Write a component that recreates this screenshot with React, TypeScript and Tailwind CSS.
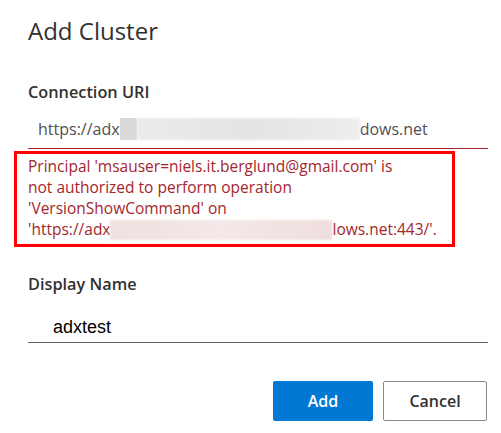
import React from "react";

export default function App() {
  return (
    <div
      className="w-[501px] h-[433px] bg-white overflow-hidden relative"
      style={{ fontFamily: '"Open Sans", "Noto Sans", sans-serif' }}
    >
      <div className="pl-[28px] pr-[13px]">
        <h1 className="pt-[15px] text-[24px] leading-[32px] text-[#323130] font-normal">
          Add Cluster
        </h1>
        <div className="mt-[34px] text-[16.3px] leading-[22px] text-[#323130] font-semibold">
          Connection URI
        </div>
        <div className="mt-[11px] h-[35px] border-b border-[#a4262c] pl-[10px] pt-[4px] flex items-start text-[16px] leading-[22px] text-[#505050]">
          <span>https://adx</span>
          <span className="inline-block w-[17px] h-[22px] bg-[#d9d9d9]" />
          <span className="inline-block w-[223px] h-[22px] bg-gradient-to-r from-[#ececec] via-[#e4e4e4] to-[#eeeeee] blur-[1px]" />
          <span>dows.net</span>
        </div>
      </div>
      <div className="ml-[14px] mt-[2px] w-[441px] h-[96px] border-[3px] border-[#ff0000] pl-[11px] pt-[2px] text-[15.5px] leading-[21px] text-[#a4262c]">
        <div>Principal 'msauser=niels.it.berglund@gmail.com' is</div>
        <div>not authorized to perform operation</div>
        <div>'VersionShowCommand' on</div>
        <div className="flex items-center">
          <span>'https://adx</span>
          <span className="inline-block w-[222px] h-[20px] bg-gradient-to-r from-[#f0e0e0] via-[#f5e8e8] to-[#efdede] blur-[1px]" />
          <span>lows.net:443/'.</span>
        </div>
      </div>
      <div className="pl-[28px] pr-[13px]">
        <div className="mt-[26px] text-[16.3px] leading-[22px] text-[#323130] font-semibold">
          Display Name
        </div>
        <div
          className="mt-[22px] h-[26px] border-b border-[#616161] pl-[25px] flex items-start text-[18px] leading-[20px] text-black"
          style={{ fontFamily: '"Liberation Sans", Arial, sans-serif' }}
        >
          adxtest
        </div>
        <div className="mt-[38px] mr-[1px] flex justify-end gap-[10px]">
          <button className="w-[100px] h-[40px] rounded-[2px] bg-[#0078d4] text-white text-[16px] font-semibold">
            Add
          </button>
          <button className="w-[104px] h-[40px] rounded-[2px] border border-[#8a8886] bg-white text-[#323130] text-[16px] font-semibold">
            Cancel
          </button>
        </div>
      </div>
    </div>
  );
}
